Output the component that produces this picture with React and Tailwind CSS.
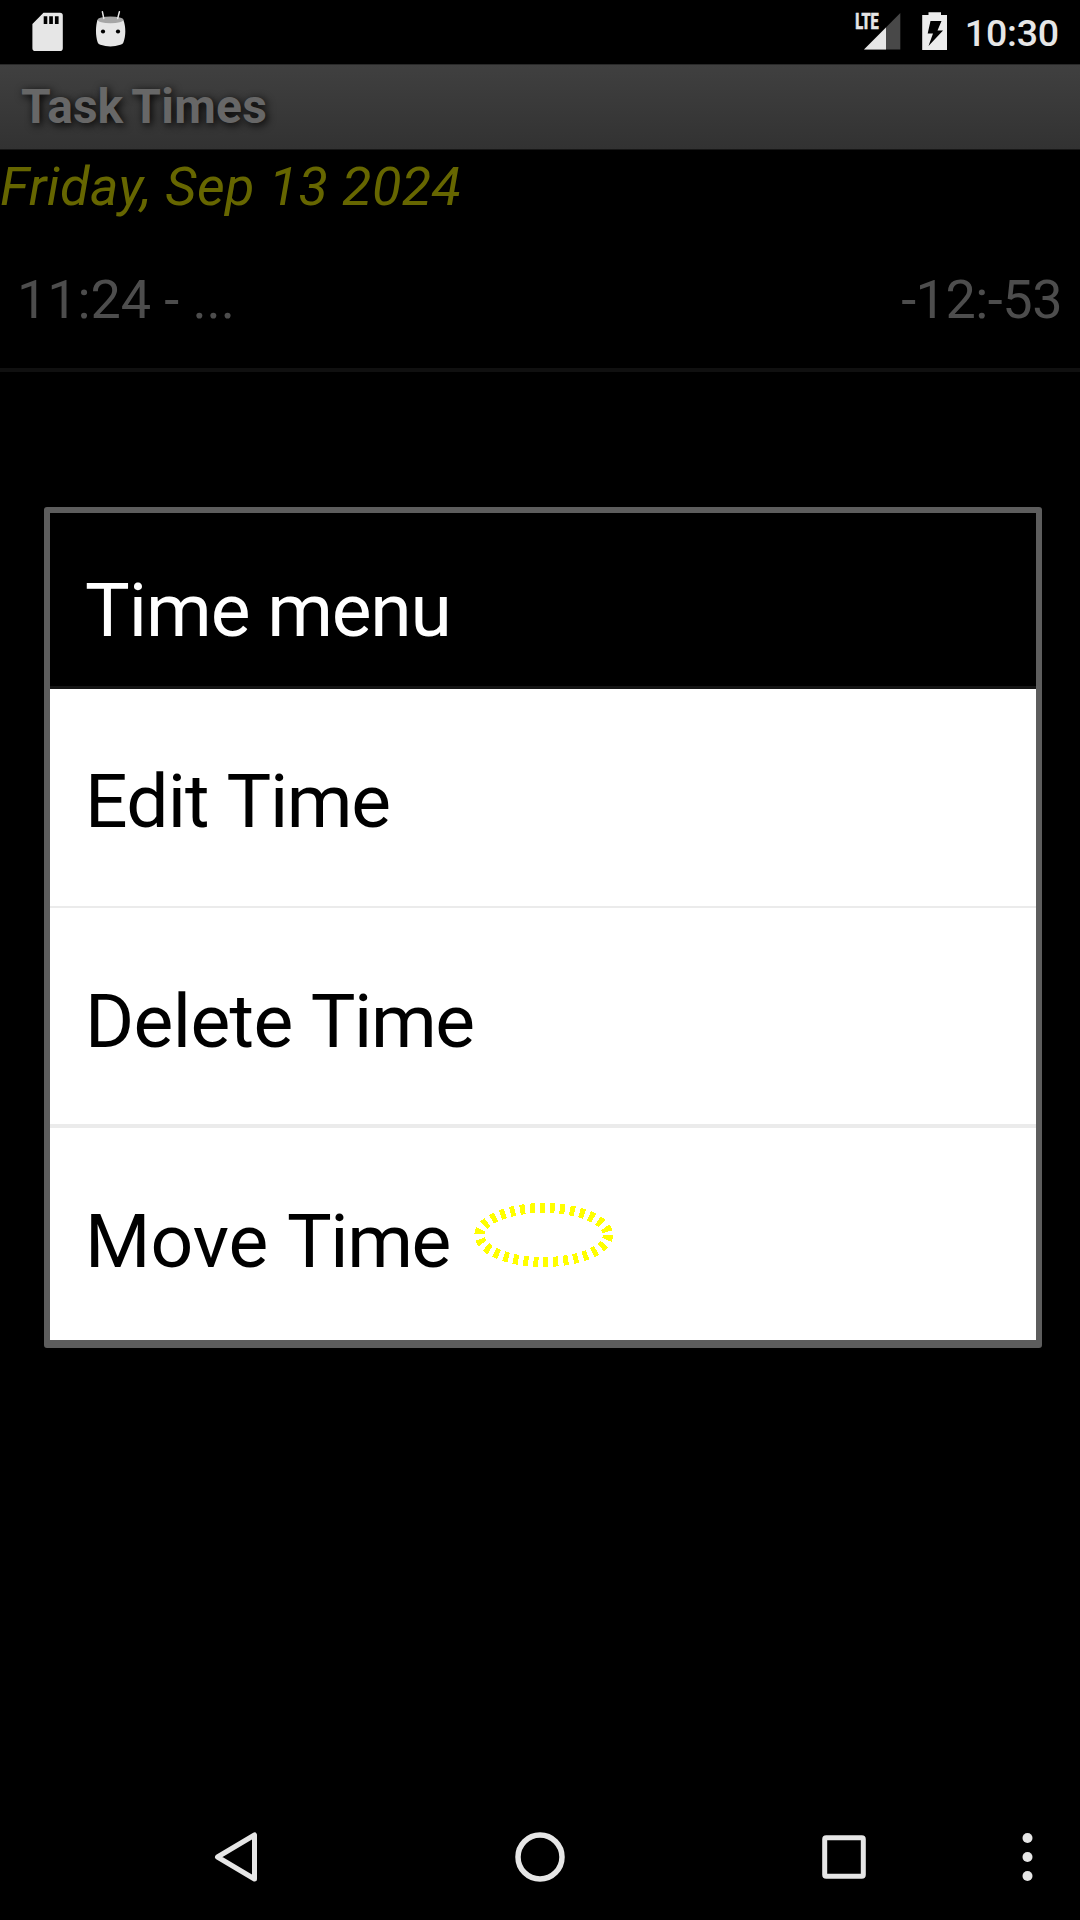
const MENU = [
  { first: "Edit ", cls: "h-[217px] pt-[7px]", tracking: "tracking-[-0.8px]" },
  { first: "Delete ", cls: "h-[218px] pt-[10px] border-t-2 border-[#ebebeb]", tracking: "tracking-[-0.6px]" },
  { first: "Move ", cls: "h-[216px] pt-[14px] border-t-4 border-[#ebebeb]", tracking: "tracking-[0px]" },
];

function StatusBar() {
  return (
    <header className="flex h-16 items-start bg-black text-[#e6e6e6]">
      <svg className="ml-8 mt-3 h-10 w-8 shrink-0" viewBox="0 0 32 40" fill="#e6e6e6">
        <path fillRule="evenodd" d="M11.5 .7H28a2.8 2.8 0 0 1 2.8 2.8v32.7a2.8 2.8 0 0 1-2.8 2.8H3.2a2.8 2.8 0 0 1-2.8-2.8V12zM11.7 4.3V12h3.6V4.3zM17.2 4.3V12h3.7V4.3zM22.9 4.3V12h3.7V4.3z" />
      </svg>
      <svg className="ml-[30px] mt-[9px] h-10 w-8 shrink-0" viewBox="0 0 32 40">
        <path d="M3.4 11C1.7 17 1.2 26 3.7 33.5Q4.4 35.3 6.4 35.8Q16.5 39 26.4 35.8Q28.700 35.3 29.4 33.5C32.2 26 31.7 17 29.4 11z" fill="#e6e6e6" />
        <ellipse cx="16.5" cy="10.8" rx="13" ry="3.4" fill="#a6a6a6" />
        <path d="M8.4 2.8 9.8 9.4M25.4 2.8 23.7 9.4" stroke="#e6e6e6" strokeWidth="1.5" strokeLinecap="round" />
        <circle cx="9" cy="22.5" r="2.1" />
        <circle cx="24" cy="22.5" r="2.1" />
      </svg>
      <svg className="ml-auto mt-1 h-12 w-[52px] shrink-0" viewBox="-4 -8 52 48">
        <path d="M46.3 1V37.5H10z" fill="#484848" />
        <path d="M32 15.5V37.5H10z" fill="#e6e6e6" />
        <text x="1.3" y="17" fontFamily="Roboto" fontWeight="800" fontSize="21.5" textLength="23.4" lengthAdjust="spacingAndGlyphs" fill="#e6e6e6" stroke="#e6e6e6" strokeWidth="0.7">LTE</text>
      </svg>
      <svg className="ml-5 mt-3 h-10 w-[26px] shrink-0" viewBox="0 0 26 40">
        <path fillRule="evenodd" fill="#ececec" d="M6.5 .2H19V3H25V38H.2V3H6.5zM8.500 9 5.7 21.5H11L6.5 34 21 18.5H15.5L19.5 9z" />
      </svg>
      <span className="ml-[17px] mr-[21px] mt-[11px] text-[37.5px] font-medium leading-[44px] tracking-[-0.2px]">10:30</span>
    </header>
  );
}

function ContextMenu() {
  return (
    <section className="absolute left-[44px] top-[507px] w-[998px] rounded-[3px] border-x-[6px] border-t-[6px] border-b-[8px] border-[#5d5d5d] bg-white text-[75px] leading-[88px]">
      <h2 className="h-[176px] border-b-[3px] border-[#151515] bg-black pl-[35px] pt-[53px] font-normal whitespace-pre text-white">
        <span className="tracking-[-1px]">{"Time "}</span>
        <span className="tracking-[-1.2px]">menu</span>
      </h2>
      {MENU.map((m) => (
        <div key={m.first} className={`flex items-center pl-[35px] whitespace-pre ${m.cls}`}>
          <span className={m.tracking}>{m.first}</span>
          <span className="tracking-[-1.4px]">Time</span>
        </div>
      ))}
      <svg className="absolute left-[424px] top-[690px] h-[66px] w-[140px]" viewBox="474 1203 140 66" shapeRendering="crispEdges">
        <ellipse cx="543.7" cy="1235" rx="64.3" ry="27" fill="none" stroke="#ffff00" strokeWidth="10" strokeDasharray="5 5" />
      </svg>
    </section>
  );
}

export default function App() {
  return (
    <div className="relative flex h-[1920px] w-[1080px] flex-col overflow-hidden bg-black font-['Roboto',sans-serif] text-black">
      <StatusBar />
      <h1 className="h-[86px] border-b border-t border-b-[#171717] border-t-[#292929] bg-linear-to-b from-[#404040] to-[#323232] pl-[21px] text-[48px] leading-[83px] font-bold whitespace-pre text-[#676767] [text-shadow:2px_2px_9px_#000]">
        <span className="[word-spacing:-4px]">{"Task "}</span>
        <span className="tracking-[0.3px]">Times</span>
      </h1>
      <div className="mt-[5px] mb-px h-[64px] text-[54px] leading-[64px] tracking-[0.43px] italic text-[#666600]">Friday, Sep 13 2024</div>
      <div className="flex h-[152px] items-center justify-between border-b-4 border-[#101010] pl-[17px] pr-[18px] pt-[11px] text-[54px] leading-[64px] text-[#4d4d4d]">
        <span className="tracking-[-0.1px]">11:24 - ...</span>
        <span className="tracking-[-0.5px]">-12:-53</span>
      </div>
      <ContextMenu />
      <nav className="mt-auto flex h-[126px]">
        <svg className="h-[126px] w-full" viewBox="0 1794 1080 126" fill="none" stroke="#e6e6e6" strokeWidth="5" strokeLinejoin="round">
          <path d="M217.5 1857 254.5 1835V1879z" />
          <circle cx="540" cy="1857" r="22" strokeWidth="5.5" />
          <rect x="824.7" y="1837.700" width="38.6" height="38.6" rx="1.5" />
          <g fill="#e6e6e6" stroke="none">
            <circle cx="1027.5" cy="1838" r="5" />
            <circle cx="1027.5" cy="1857" r="5" />
            <circle cx="1027.5" cy="1876" r="5" />
          </g>
        </svg>
      </nav>
    </div>
  );
}
